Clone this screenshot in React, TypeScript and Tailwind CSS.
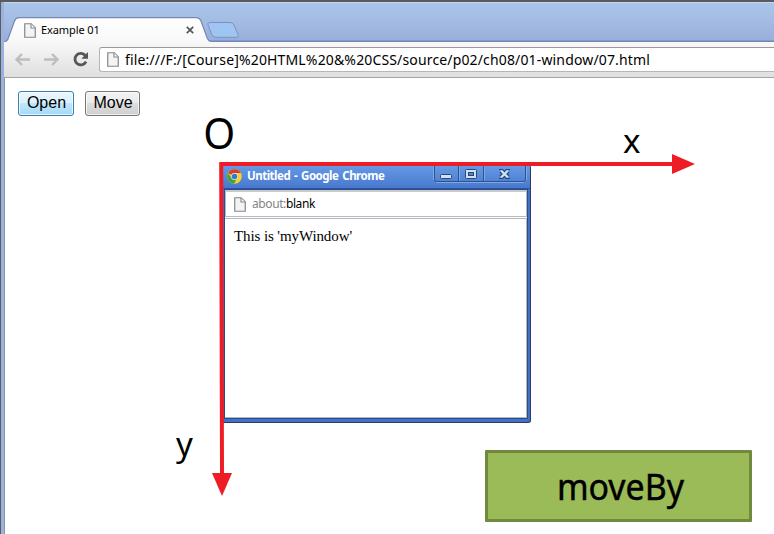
import type { ReactNode } from "react";

function PageIcon({ className = "" }: { className?: string }) {
  return (
    <svg className={`shrink-0 ${className}`} width="12" height="15" viewBox="0 0 12 15">
      <path d="M.75.75H7.2L11.25 4.8V14.25H.75Z" fill="#f4f4f4" stroke="#858585" strokeWidth="1.2" />
      <path d="M7 1V5H11" fill="#fff" stroke="#858585" strokeWidth="1.1" />
    </svg>
  );
}

function ChromeIcon() {
  return (
    <svg className="shrink-0" width="15" height="15" viewBox="0 0 30 30">
      <circle cx="15" cy="15" r="14.5" fill="#f9d12e" />
      <path d="M15 15 2.4 7.8A14.5 14.5 0 0 1 27.6 8H15Z" fill="#dc3b2d" />
      <path d="M2.4 7.8A14.5 14.5 0 0 0 14 29.5L20 19 15 15 9 18.5Z" fill="#42a346" />
      <circle cx="15" cy="15" r="6.8" fill="#e8f0fa" />
      <circle cx="15" cy="15" r="5.6" fill="#3b78c9" />
    </svg>
  );
}

function TabStrip() {
  return (
    <div className="relative h-10 border-t border-[#c3d5ef] bg-linear-to-b from-[#abc5ea] via-[#a3bbe2] to-[#97addb]">
      <svg className="absolute top-0 left-0" width="770" height="39" viewBox="4 3 770 39">
        <defs>
          <linearGradient id="tab" x1="0" y1="0" x2="0" y2="1">
            <stop offset="0" stopColor="#ffffff" />
            <stop offset="1" stopColor="#f8f8f8" />
          </linearGradient>
        </defs>
        <path d="M210 41.2H774" stroke="#7186b6" strokeWidth="1.4" />
        <path
          d="M4 43V42.2Q7 41.5 8 39L14.5 21Q15.8 17.7 19 17.7H196Q199.5 17.7 201 21L207 37.5Q208.5 41.5 212 42V43Z"
          fill="url(#tab)"
        />
        <path
          d="M4 42.2Q7 41.5 8 39L14.5 21Q15.8 17.7 19 17.7H196Q199.5 17.7 201 21L207 37.5Q208.5 41.3 211 41.3"
          fill="none"
          stroke="#7589b2"
          strokeWidth="1.2"
        />
        <path
          d="M209.5 22.5H230Q233 22.5 234 25L238 34.5Q239.2 37.3 236 37.3H216Q213 37.3 212 34.8L208 25Q207 22.5 209.5 22.5Z"
          fill="#9fc5f3"
          stroke="#7b93be"
        />
      </svg>
      <div className="relative flex h-full items-center pl-[20px]">
        <PageIcon className="mt-[15px]" />
        <span className="ml-[5px] mt-[16px] w-[145px] whitespace-nowrap font-['Noto_Sans',sans-serif] text-[11px] tracking-[-0.1px] text-black">
          Example 01
        </span>
        <svg className="mt-[14px]" width="8" height="8" viewBox="0 0 8 8">
          <path d="M.8.8 7.2 7.2M7.2.8.8 7.2" stroke="#555" strokeWidth="1.7" />
        </svg>
      </div>
    </div>
  );
}

function Toolbar() {
  return (
    <div className="flex h-9 border-b border-[#a4a4a4] bg-linear-to-b from-[#f8f8f8] to-[#dfdfdf]">
      <svg className="shrink-0" width="95" height="35" viewBox="4 42 95 35" fill="none">
        <path d="M30 59.5H17M22 54l-5.5 5.5L22 65" stroke="#bdbdbd" strokeWidth="2.4" />
        <path d="M44 59.5H57M52 54l5.5 5.5L52 65" stroke="#bdbdbd" strokeWidth="2.4" />
        <path d="M85.3 55.5A5.8 5.8 0 1 0 86 61.7" stroke="#565656" strokeWidth="2.8" />
        <path d="M88 52V58.7H81.3Z" fill="#565656" />
      </svg>
      <div className="mt-[5px] flex h-[25px] flex-1 items-center rounded-l-[3px] border border-r-0 border-[#b6b6b6] border-t-[#999] bg-white pl-[7px] whitespace-nowrap">
        <PageIcon />
        <span className="ml-[6px] font-['Noto_Sans',sans-serif] text-[14px] tracking-[0.15px] text-black">
          file:///F:/[Course]%20HTML%20&amp;%20CSS/source/p02/ch08/01-window/07.html
        </span>
      </div>
    </div>
  );
}

function FormButton({ children, active = false }: { children: ReactNode; active?: boolean }) {
  const tone = active
    ? "border-[#3c7fb1] bg-[linear-gradient(#eaf6fd_0%,#d9f0fc_50%,#bee6fd_50%,#a7d9f5_100%)]"
    : "border-[#777] bg-[linear-gradient(#f2f2f2_0%,#ebebeb_50%,#dddddd_50%,#cfcfcf_100%)]";
  return (
    <button
      className={`flex h-[25px] w-full items-center justify-center rounded-[3px] border font-['Liberation_Sans',Arial,sans-serif] text-[16px] text-black shadow-[inset_0_0_0_1px_#ffffffb0] ${tone}`}
    >
      <span className="-mt-px ml-px">{children}</span>
    </button>
  );
}

function WindowControls() {
  return (
    <svg className="shrink-0" width="94" height="18" viewBox="433 165 94 18" fill="none">
      <path d="M434.5 165V179.5Q434.5 181.5 437 181.5H523Q525.5 181.5 525.5 179V165" stroke="#305387" />
      <path d="M458.5 165V181M483.5 165V181" stroke="#305387" />
      <path d="M433.5 165V180M459.5 165V180.5M484.5 165V180.5M436 182.5H524M526.5 165V180" stroke="#7ea8e8" />
      <rect x="440.5" y="174.5" width="11" height="4" rx="1" fill="#d3e1f6" stroke="#27467c" />
      <rect x="465.5" y="169.5" width="11" height="9" rx="1" fill="#d3e1f6" stroke="#27467c" />
      <rect x="468.5" y="172.5" width="5" height="3" fill="#5482cc" stroke="#27467c" />
      <path d="M501 170.5 508 177.5M508 170.5 501 177.5" stroke="#27467c" strokeWidth="4.6" />
      <path d="M501 170.5 508 177.5M508 170.5 501 177.5" stroke="#d3e1f6" strokeWidth="2.4" />
      <path d="M499 169.5H503M506 169.5H510M499 178.5H503M506 178.5H510" stroke="#27467c" />
    </svg>
  );
}

function PopupWindow() {
  return (
    <div className="absolute top-[87px] left-[217px] flex h-[258px] w-[309px] flex-col rounded-r-[3px] border-r border-b border-[#303c50] bg-[#4272c5] pr-[2px] pb-[3px] pl-[2px]">
      <div className="-mr-[2px] -ml-[2px] flex h-[24px] shrink-0 items-start justify-between rounded-tr-[3px] border-b border-[#315396] bg-linear-to-b from-[#669be5] to-[#4878ce] pr-[3px] pl-[5px]">
        <div className="flex items-center pt-[3px]">
          <ChromeIcon />
          <span className="ml-[5px] whitespace-nowrap font-['Noto_Sans',sans-serif] text-[11.5px] leading-[16px] font-bold tracking-[-0.5px] text-white [word-spacing:1.4px]">
            Untitled - Google Chrome
          </span>
        </div>
        <WindowControls />
      </div>
      <div className="flex flex-1 flex-col border border-[#264d91] bg-white">
        <div className="flex h-[27px] items-center border border-t-2 border-[#b4bbc8] border-t-[#c9cacb] pl-[8px]">
          <PageIcon />
          <span className="ml-[6px] font-['Noto_Sans',sans-serif] text-[12px] tracking-[-0.4px] text-black">
            <span className="text-[#848484]">about:</span>blank
          </span>
        </div>
        <div className="mt-[1px] flex-1 border-t border-r border-b border-[#b7b7b7] pt-[7px] pl-[9px] font-['Liberation_Serif','Times_New_Roman',serif] text-[15px] leading-[20px] tracking-[-0.1px] text-black">
          This is 'myWindow'
        </div>
      </div>
    </div>
  );
}

function Axes() {
  return (
    <svg className="pointer-events-none absolute top-0 left-0" width="769" height="456" viewBox="5 78 769 456">
      <path d="M219.2 162H673V166H223.2L224 474H220Z" fill="#ee1c25" />
      <path d="M672 154 695 164 672 174Z" fill="#ee1c25" />
      <path d="M212 473H232L222 496Z" fill="#ee1c25" />
    </svg>
  );
}

export default function App() {
  return (
    <div className="flex h-[534px] w-[774px] flex-col overflow-hidden border-t-2 border-l border-[#5b5a5c] bg-[#9ab2dd] pl-[3px]">
      <TabStrip />
      <Toolbar />
      <main className="relative flex-1 border-l border-[#8296b7] bg-white">
        <div className="flex gap-[11px] pt-[13px] pl-[13px]">
          <div className="w-[56px]">
            <FormButton active>Open</FormButton>
          </div>
          <div className="w-[55px]">
            <FormButton>Move</FormButton>
          </div>
        </div>
        <PopupWindow />
        <Axes />
        <div className="absolute top-[25px] left-[197px] origin-center scale-x-[0.93] font-['Noto_Sans',sans-serif] text-[44px] leading-[59px] text-black">O</div>
        <div className="absolute top-[43px] left-[618px] font-['Noto_Sans',sans-serif] text-[33px] leading-[40px] text-black">x</div>
        <div className="absolute top-[346px] left-[171px] font-['Noto_Sans',sans-serif] text-[33px] leading-[40px] text-black">y</div>
        <div className="absolute top-[372px] left-[480px] flex h-[72px] w-[267px] items-center justify-center rounded-[1px] border-3 border-[#71893f] bg-[#9bbb59] font-['Noto_Sans',sans-serif] text-[37px] text-black">
          <span className="ml-[3px] scale-x-[0.915] [-webkit-text-stroke:0.5px_black]">moveBy</span>
        </div>
      </main>
    </div>
  );
}
